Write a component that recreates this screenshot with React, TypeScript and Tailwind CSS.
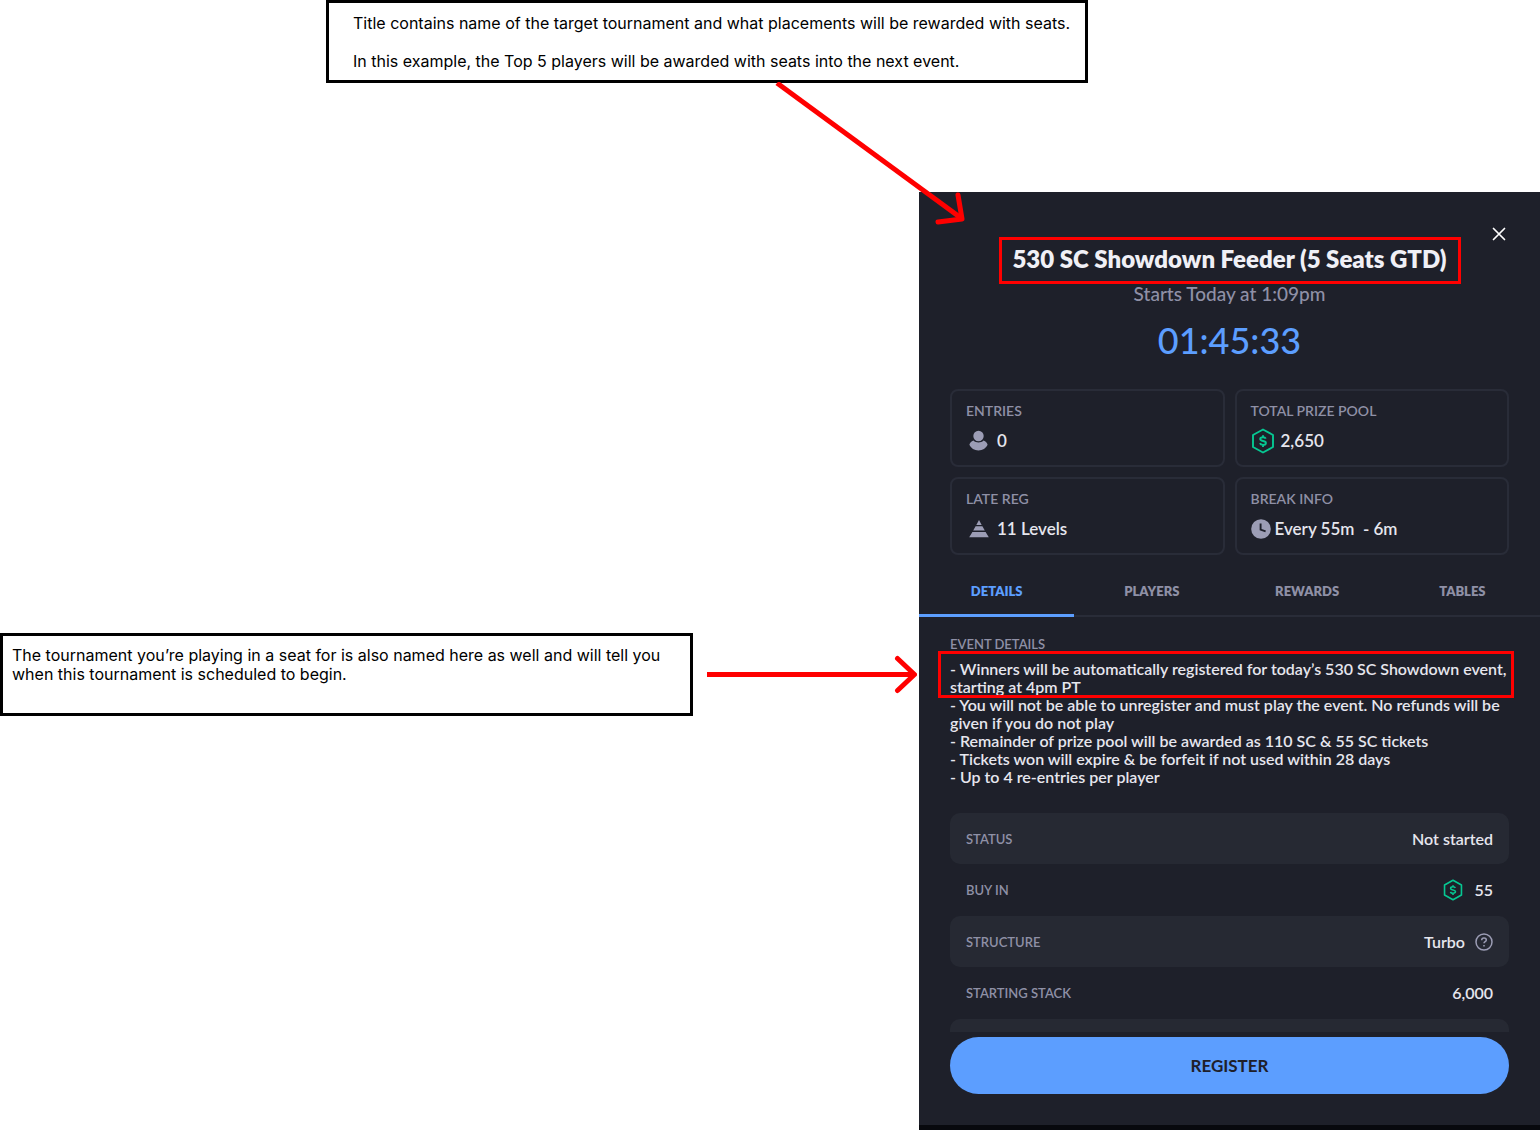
import React from "react";

const muted = "text-[#8f90a6] leading-4 font-semibold";

function SeatCoin({ className }: { className: string }) {
  return (
    <svg viewBox="0 0 24 26" className={className} fill="none" stroke="#06c792" aria-hidden="true">
      <path d="M12 1.5 22 7v12l-10 5.500L2 19V7Z" strokeWidth="1.900" strokeLinejoin="round" />
      <path d="M14.800 10.600C14.300 9.600 13.200 9.200 12 9.200c-1.600 0-2.800.7-2.800 1.900 0 2.700 5.700 1.100 5.700 3.800 0 1.300-1.300 2-2.900 2-1.400 0-2.600-.5-3.100-1.700M12 7.300v2M12 16.900v2" strokeWidth="1.900" />
    </svg>
  );
}

function PersonIcon() {
  return (
    <svg viewBox="0 0 20 22" className="ml-[3px] h-[22px] w-5" fill="#9c9db5" aria-hidden="true">
      <circle cx="9.500" cy="6" r="5.200" />
      <path d="M4.500 10.500C2.200 11.500.8 13 .4 14.800c1.600 3.500 5 5.700 9.100 5.700s7.500-2.200 9.100-5.700c-.4-1.800-1.800-3.300-4.100-4.300-1.300 1.400-3.100 1.900-5 1.900s-3.700-.5-5-1.900Z" />
    </svg>
  );
}

function LevelsIcon() {
  return (
    <svg viewBox="0 0 20 20" className="ml-[3px] size-5" fill="#9c9db5" aria-hidden="true">
      <path d="M10 1 12.700 5.900H7.300ZM6.600 7.200h6.800l2.400 4.200H4.200ZM3.400 12.900h13.200l3.200 5.300H.2Z" />
    </svg>
  );
}

function ClockIcon() {
  return (
    <svg viewBox="0 0 20 20" className="size-5" aria-hidden="true">
      <circle cx="10" cy="10" r="9.800" fill="#9c9db5" />
      <path d="M9.600 4.500v6.100l5 1.700" fill="none" stroke="#1e202a" strokeWidth="1.900" />
    </svg>
  );
}

function StatCard({ name, children }: { name: string; children: React.ReactNode }) {
  return (
    <div className="rounded-lg border-2 border-[#292c38] px-[14px] py-3">
      <dt className={`text-[14px] ${muted}`}>{name}</dt>
      <dd className="mt-[10px] flex h-6 items-center text-[17px] leading-6 font-semibold text-[#e6e6ee]">{children}</dd>
    </div>
  );
}

function Row({ name, filled, children }: { name: string; filled?: boolean; children: React.ReactNode }) {
  return (
    <div className={`flex items-center justify-between rounded-[10px] px-4 ${filled ? "h-[51px] bg-[#262933]" : "h-[52px]"}`}>
      <dt className={`text-[13px] ${muted}`}>{name}</dt>
      <dd className="flex items-center gap-[10px] text-[16px] leading-6 font-semibold text-[#e6e6ee]">{children}</dd>
    </div>
  );
}

const tabs = ["DETAILS", "PLAYERS", "REWARDS", "TABLES"];

function TournamentPanel() {
  return (
    <section aria-labelledby="event-title" className="w-[621px] shrink-0 border-b-[5px] border-[#08090e] bg-[#1e202a] font-['Lato',sans-serif]">
      <div className="flex flex-col items-center px-[31px] pt-8">
        <button type="button" aria-label="Close" className="-mb-[7px] flex size-5 items-center justify-center self-end text-white">
          <svg viewBox="0 0 14 14" className="size-[14px]" fill="none" stroke="currentColor" strokeWidth="1.700" strokeLinecap="round">
            <path d="m1.500 1.500 11 11m0-11-11 11" />
          </svg>
        </button>
        <h1 id="event-title" className="flex h-[47px] w-[462px] justify-center border-3 border-[#ff0000] pt-[3px] text-[24px] leading-8 font-extrabold whitespace-nowrap text-[#f0f0f6]">
          530 SC Showdown Feeder (5 Seats GTD)
        </h1>
        <p className="-mt-[2px] text-[19px] leading-6 font-medium text-[#8f90a6]">Starts Today at 1:09pm</p>
        <time className="mt-[10px] text-[36px] leading-12 font-medium text-[#5c9eff]">01:45:33</time>
        <dl className="mt-[25px] grid w-full grid-cols-2 gap-[10px]">
          <StatCard name="ENTRIES">
            <PersonIcon />
            <span className="ml-2">0</span>
          </StatCard>
          <StatCard name="TOTAL PRIZE POOL">
            <SeatCoin className="h-[26px] w-6" />
            <span className="ml-[6px]">2,650</span>
          </StatCard>
          <StatCard name="LATE REG">
            <LevelsIcon />
            <span className="ml-2">11 Levels</span>
          </StatCard>
          <StatCard name="BREAK INFO">
            <ClockIcon />
            <span className="ml-1 whitespace-pre">Every 55m  - 6m</span>
          </StatCard>
        </dl>
      </div>

      <div role="tablist" className="mt-[14px] grid grid-cols-4">
        {tabs.map((tab, i) => (
          <button
            key={tab}
            type="button"
            role="tab"
            aria-selected={i === 0}
            className={`flex h-12 justify-center pt-[14px] text-[13px] leading-4 font-extrabold ${i === 0 ? "rounded-tr-sm border-b-3 border-[#5c9eff] text-[#5c9eff]" : "border-b-2 border-[#292c38] text-[#8f90a6]"}`}
          >
            {tab}
          </button>
        ))}
      </div>

      <div className="px-[31px] pt-[19px]">
        <h2 className={`text-[13px] ${muted}`}>EVENT DETAILS</h2>
        <div className="mt-2 h-[153px] text-[16px] leading-[18px] font-semibold text-[#e6e6ee]">
          <p className="relative whitespace-nowrap">
            - Winners will be automatically registered for today’s 530 SC Showdown event,
            <br />
            starting at 4pm PT
            <span className="pointer-events-none absolute -top-[9px] -right-[5px] -bottom-[2px] -left-3 border-3 border-[#ff0000]" />
          </p>
          <p className="whitespace-nowrap">
            - You will not be able to unregister and must play the event. No refunds will be
            <br />
            given if you do not play
          </p>
          <p>- Remainder of prize pool will be awarded as 110 SC &amp; 55 SC tickets</p>
          <p>- Tickets won will expire &amp; be forfeit if not used within 28 days</p>
          <p>- Up to 4 re-entries per player</p>
        </div>

        <dl>
          <Row name="STATUS" filled>Not started</Row>
          <Row name="BUY IN">
            <SeatCoin className="h-[22px] w-[22px]" />
            55
          </Row>
          <Row name="STRUCTURE" filled>
            Turbo
            <svg viewBox="0 0 18 18" className="size-[18px]" fill="none" stroke="#9c9db5" strokeWidth="1.500" aria-hidden="true">
              <circle cx="9" cy="9" r="8" />
              <path d="M6.700 7.200C6.700 5.800 7.700 5 9 5s2.300.8 2.300 2c0 1.600-2.300 1.600-2.300 3.300M9 11.900v1.600" />
            </svg>
          </Row>
          <Row name="STARTING STACK">6,000</Row>
        </dl>
        <div className="h-[13px] rounded-t-[10px] bg-[#262933]" />
        <button type="button" className="mt-[5px] mb-[31px] h-[57px] w-full rounded-full bg-[#5c9eff] text-[17px] leading-6 font-bold text-[#1e202a]">
          REGISTER
        </button>
      </div>
    </section>
  );
}

export default function App() {
  return (
    <main className="min-h-screen bg-white font-['Inter',sans-serif] text-[16px] leading-[19px] text-black">
      <div className="relative ml-[326px] w-[762px] border-3 border-black pt-[11px] pr-2 pb-[9px] pl-6 whitespace-nowrap">
        <p>Title contains name of the target tournament and what placements will be rewarded with seats.</p>
        <p className="mt-[19px]">In this example, the Top 5 players will be awarded with seats into the next event.</p>
        <svg viewBox="0 0 200 150" className="absolute top-full left-[439px] mt-[2px] h-[150px] w-[200px]" fill="none" stroke="#ff0000" strokeWidth="5" aria-hidden="true">
          <path d="M9 1 193 136" />
          <path d="m190 113 4 24-24 3" strokeLinecap="round" strokeLinejoin="round" />
        </svg>
      </div>

      <div className="mt-[109px] flex items-start">
        <div className="mt-[441px] flex flex-1 items-center">
          <p className="h-[83px] w-[693px] shrink-0 border-3 border-black py-[10px] pr-6 pl-[9px]">
            The tournament you’re playing in a seat for is also named here as well and will tell you when this tournament is scheduled to begin.
          </p>
          <svg viewBox="0 0 210 40" className="mr-[2px] ml-[14px] h-10 min-w-0 flex-1" fill="none" stroke="#ff0000" strokeWidth="5" aria-hidden="true">
            <path d="M0 19.500h206" />
            <path d="m190.500 3.500 17 16-17 16" strokeLinecap="round" strokeLinejoin="round" />
          </svg>
        </div>
        <TournamentPanel />
      </div>
    </main>
  );
}
